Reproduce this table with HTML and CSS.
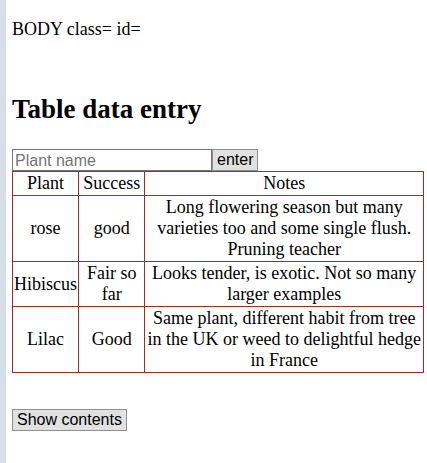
FILE: index.html
```html
<!DOCTYPE html>
<html lang="en">
<head>
<meta charset="utf-8">
<title>Table data entry</title>
<link rel="stylesheet" href="styles.css">
</head>
<body>
<p class="meta">BODY class= id=</p>
<h2 class="title">Table data entry</h2>
<div class="entry">
  <input class="entry-input" type="text" placeholder="Plant name">
  <button class="btn" type="button">enter</button>
</div>
<table class="plants">
  <tr><td>Plant</td><td>Success</td><td>Notes</td></tr>
  <tr><td>rose</td><td>good</td><td>Long flowering season but many varieties too and some single flush. Pruning teacher</td></tr>
  <tr><td>Hibiscus</td><td>Fair so far</td><td>Looks tender, is exotic. Not so many larger examples</td></tr>
  <tr><td>Lilac</td><td>Good</td><td>Same plant, different habit from tree in the UK or weed to delightful hedge in France</td></tr>
</table>
<div class="footer">
  <button class="btn" type="button">Show contents</button>
</div>
</body>
</html>
```
FILE: styles.css
```css
html {
  border-left: 6px solid #d6dee8;
  min-height: 100vh;
  box-sizing: border-box;
  background: #fff;
}
body {
  margin: 0;
  padding: 19px 0 0 6px;
  font-family: "Liberation Serif", "Times New Roman", serif;
  font-size: 18px;
  color: #000;
}
.meta {
  margin: 0;
}
.title {
  font-size: 27px;
  font-weight: bold;
  margin: 54px 0 24px;
}
.entry {
  display: flex;
  height: 22px;
}
.entry-input {
  box-sizing: border-box;
  width: 200px;
  height: 22px;
  margin: 0;
  padding: 1px 2px 0;
  border: 1px solid #767676;
  font-family: "Liberation Sans", Arial, sans-serif;
  font-size: 16px;
  color: #000;
}
.entry-input::placeholder {
  color: #757575;
}
.btn {
  box-sizing: border-box;
  height: 22px;
  margin: 0;
  padding: 0 4px;
  border: 1px solid #8f8f8f;
  background: #e1e1e1;
  font-family: "Liberation Sans", Arial, sans-serif;
  font-size: 16px;
  color: #000;
}
.plants {
  border-collapse: collapse;
  width: 412px;
}
.plants td {
  border: 1px solid #a52a2a;
  padding: 1px;
  text-align: center;
  vertical-align: middle;
}
.footer {
  margin-top: 36px;
}
```
